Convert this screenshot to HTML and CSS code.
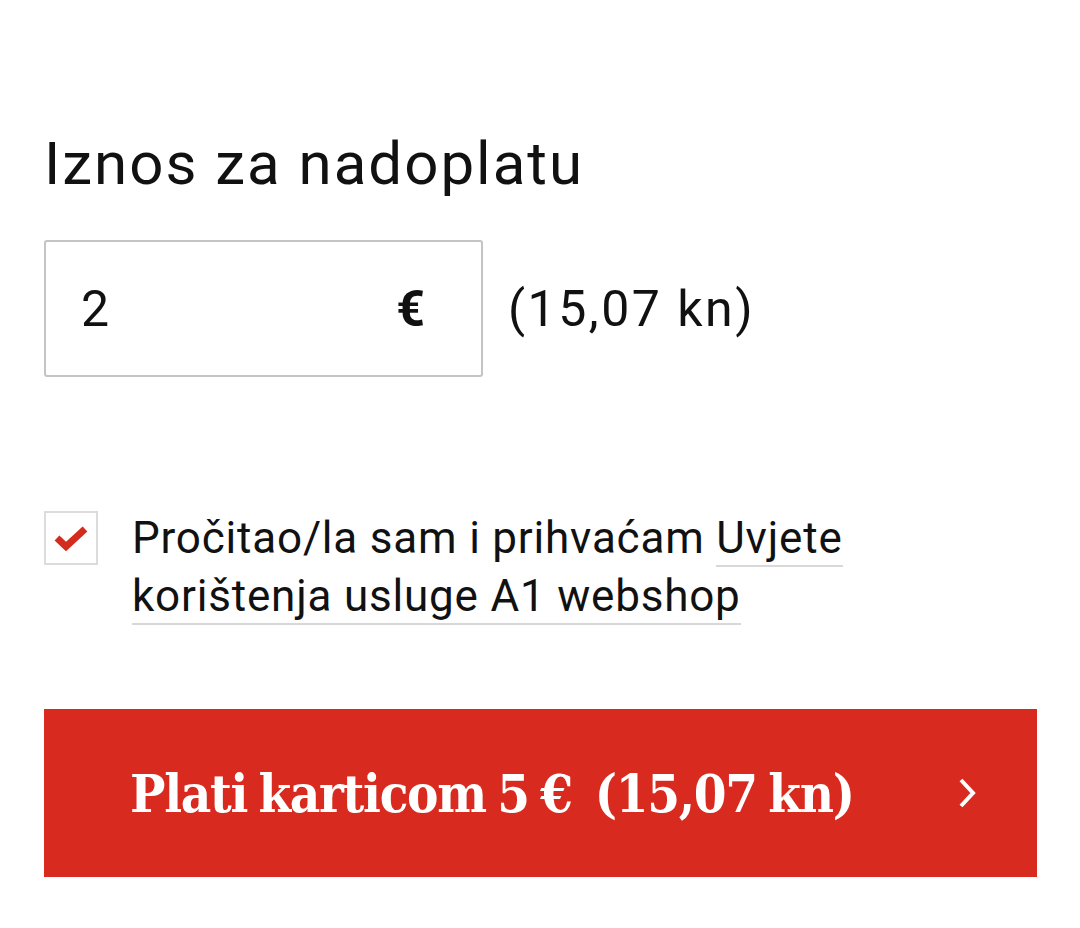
FILE: index.html
```html
<!DOCTYPE html>
<html>
<head>
<meta name="viewport" content="width=device-width, initial-scale=1">
<link rel="stylesheet" href="styles.css">
</head>
<body>
  <!-- Top-up amount form -->
  <div class="page">
    <h1 class="title">Iznos za nadoplatu</h1>

    <div class="amountRow">
      <div class="amountBox">
        <span class="amountValue">2</span>
        <span class="amountCurrency">€</span>
      </div>
      <span class="amountKn">(15,07 kn)</span>
    </div>

    <!-- Terms checkbox -->
    <div class="terms">
      <span class="checkBox">
        <svg class="checkIcon" viewBox="0 0 34 26">
          <path d="M3 13 L12 21.5 L31 4" fill="none" stroke="#d52b1e" stroke-width="7"/>
        </svg>
      </span>
      <p class="termsText">Pročitao/la sam i prihvaćam <a href="#" class="termsLink">Uvjete korištenja usluge A1 webshop</a></p>
    </div>

    <!-- Pay button -->
    <button class="payButton">
      <span class="payLabel">Plati karticom 5 €&nbsp; (15,07 kn)</span>
      <svg class="payArrow" width="20" height="32" viewBox="0 0 20 32">
        <path d="M4 3 L16 16 L4 29" fill="none" stroke="white" stroke-width="4"/>
      </svg>
    </button>
  </div>
</body>
</html>
```

FILE: styles.css
```css
body {
    margin: 0;
    background-color: white;
    color: #111;
    font-family: Roboto, "Noto Sans", sans-serif;
}

.page {
    padding: 124px 44px 0 44px;
}

.title {
    margin: 0;
    font-size: 60px;
    font-weight: 400;
    letter-spacing: 2px;
    line-height: 80px;
}

/* Amount input and kuna conversion */
.amountRow {
    display: flex;
    align-items: center;
    margin-top: 36px;
}

.amountBox {
    width: 439px;
    height: 137px;
    box-sizing: border-box;
    border: 2px solid #c4c4c4;
    border-radius: 3px;
    display: flex;
    align-items: center;
    justify-content: space-between;
    padding: 0 56px 0 35px;
}

.amountValue {
    font-size: 50px;
}

.amountCurrency {
    font-size: 50px;
    font-weight: 700;
}

.amountKn {
    margin-left: 25px;
    font-size: 50px;
    letter-spacing: 2.5px;
}

/* Terms */
.terms {
    display: flex;
    align-items: flex-start;
    margin-top: 134px;
}

.checkBox {
    flex: none;
    width: 54px;
    height: 54px;
    box-sizing: border-box;
    border: 2px solid #dcdcdc;
    display: flex;
    align-items: center;
    justify-content: center;
}

.checkIcon {
    width: 34px;
    height: 26px;
}

.termsText {
    margin: -2px 0 0 34px;
    font-size: 44px;
    line-height: 58px;
    letter-spacing: 0.8px;
    max-width: 780px;
}

.termsLink {
    color: inherit;
    text-decoration: none;
    border-bottom: 2px solid #d8d8d8;
    padding-bottom: 1px;
}

/* Red pay button */
.payButton {
    margin-top: 84px;
    width: 993px;
    height: 168px;
    border: none;
    background-color: #d82a1e;
    color: white;
    display: flex;
    align-items: center;
    padding: 0 60px 0 86px;
    cursor: pointer;
}

/* Slab label squeezed a little to match the condensed brand face */
.payLabel {
    flex: none;
    display: inline-block;
    white-space: nowrap;
    font-family: "DejaVu Serif", serif;
    font-weight: 700;
    font-size: 53px;
    letter-spacing: -1.5px;
    word-spacing: -4px;
    transform: scaleX(0.89);
    transform-origin: left center;
}

.payArrow {
    flex: none;
    margin-left: auto;
}
```
